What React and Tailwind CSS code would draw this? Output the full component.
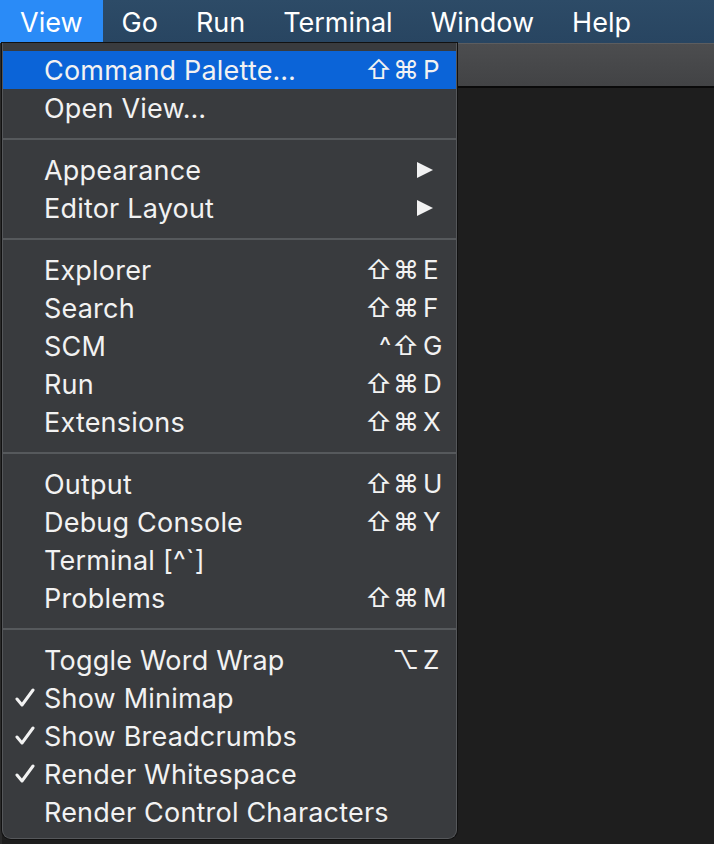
import React from 'react';

const font = { fontFamily: 'Inter, "DejaVu Sans", sans-serif' };

const sections = [
  [
    { label: 'Command Palette…', mods: '⇧⌘', key: 'P', active: true },
    { label: 'Open View…' },
  ],
  [
    { label: 'Appearance', sub: true },
    { label: 'Editor Layout', sub: true },
  ],
  [
    { label: 'Explorer', mods: '⇧⌘', key: 'E' },
    { label: 'Search', mods: '⇧⌘', key: 'F' },
    { label: 'SCM', mods: '^⇧', key: 'G' },
    { label: 'Run', mods: '⇧⌘', key: 'D' },
    { label: 'Extensions', mods: '⇧⌘', key: 'X' },
  ],
  [
    { label: 'Output', mods: '⇧⌘', key: 'U' },
    { label: 'Debug Console', mods: '⇧⌘', key: 'Y' },
    { label: 'Terminal [^`]' },
    { label: 'Problems', mods: '⇧⌘', key: 'M' },
  ],
  [
    { label: 'Toggle Word Wrap', mods: '⌥', key: 'Z' },
    { label: 'Show Minimap', checked: true },
    { label: 'Show Breadcrumbs', checked: true },
    { label: 'Render Whitespace', checked: true },
    { label: 'Render Control Characters' },
  ],
];

const Check = () => (
  <svg width="20" height="20" viewBox="0 0 20 20" className="block">
    <path d="M2 11 L7 17 L18 2" fill="none" stroke="#f2f2f2" strokeWidth="3" strokeLinecap="round" strokeLinejoin="round" />
  </svg>
);

const Arrow = () => (
  <svg width="18" height="18" viewBox="0 0 18 18" className="block">
    <polygon points="1,1 17,9 1,17" fill="#f2f2f2" />
  </svg>
);

const MenuItem = ({ item }) => (
  <div
    className={`relative flex items-center h-[38px] text-[#f2f2f2] ${
      item.active ? 'bg-[#0b64d8]' : ''
    }`}
  >
    <div className="w-[41px] flex justify-end pr-[9px]">
      {item.checked && <Check />}
    </div>
    <span className="flex-1 leading-none text-[27px] tracking-[0.2px]">{item.label}</span>
    {item.sub && (
      <div className="w-[40px] flex">
        <Arrow />
      </div>
    )}
    {item.key && (
      <div className="flex items-center leading-none text-[26px]">
        <span className="w-[100px] text-right tracking-[1px]">{item.mods}</span>
        <span className="w-[36px] pl-[3px]">{item.key}</span>
      </div>
    )}
  </div>
);

export default function App() {
  return (
    <div className="relative w-[714px] h-[844px] overflow-hidden bg-[#1e1e1e]" style={font}>
      {/* menu bar */}
      <div className="flex h-[43px] bg-gradient-to-b from-[#2d4b67] to-[#284561] text-white text-[27px]">
        <div className="flex items-center px-[20px] pt-[3px] bg-[#2a8bf7]">View</div>
        <div className="flex items-center px-[19px] pt-[3px]">Go</div>
        <div className="flex items-center px-[19px] pt-[3px]">Run</div>
        <div className="flex items-center px-[19px] pt-[3px]">Terminal</div>
        <div className="flex items-center px-[19px] pt-[3px]">Window</div>
        <div className="flex items-center px-[19px] pt-[3px]">Help</div>
      </div>

      {/* window behind */}
      <div className="h-[45px] bg-gradient-to-b from-[#4c4d4f] to-[#424345] border-t border-[#5c5d5f] border-b-2 border-b-[#0a0a0a]" />
      <div className="absolute left-0 top-[43px] bottom-0 w-[2px] bg-[#2a2a2a]" />

      {/* dropdown */}
      <div className="absolute left-[2px] top-[43px] w-[455px] h-[796px] bg-[#393b3e] border border-t-0 border-[#55575a] rounded-b-[9px] pt-[8px] shadow-[0_0_0_1px_#111]">
        {sections.map((sec, i) => (
          <div key={i}>
            {i > 0 && <div className="my-[11px] h-[2px] bg-[#56595c]" />}
            {sec.map((item) => (
              <MenuItem key={item.label} item={item} />
            ))}
          </div>
        ))}
      </div>
    </div>
  );
}
